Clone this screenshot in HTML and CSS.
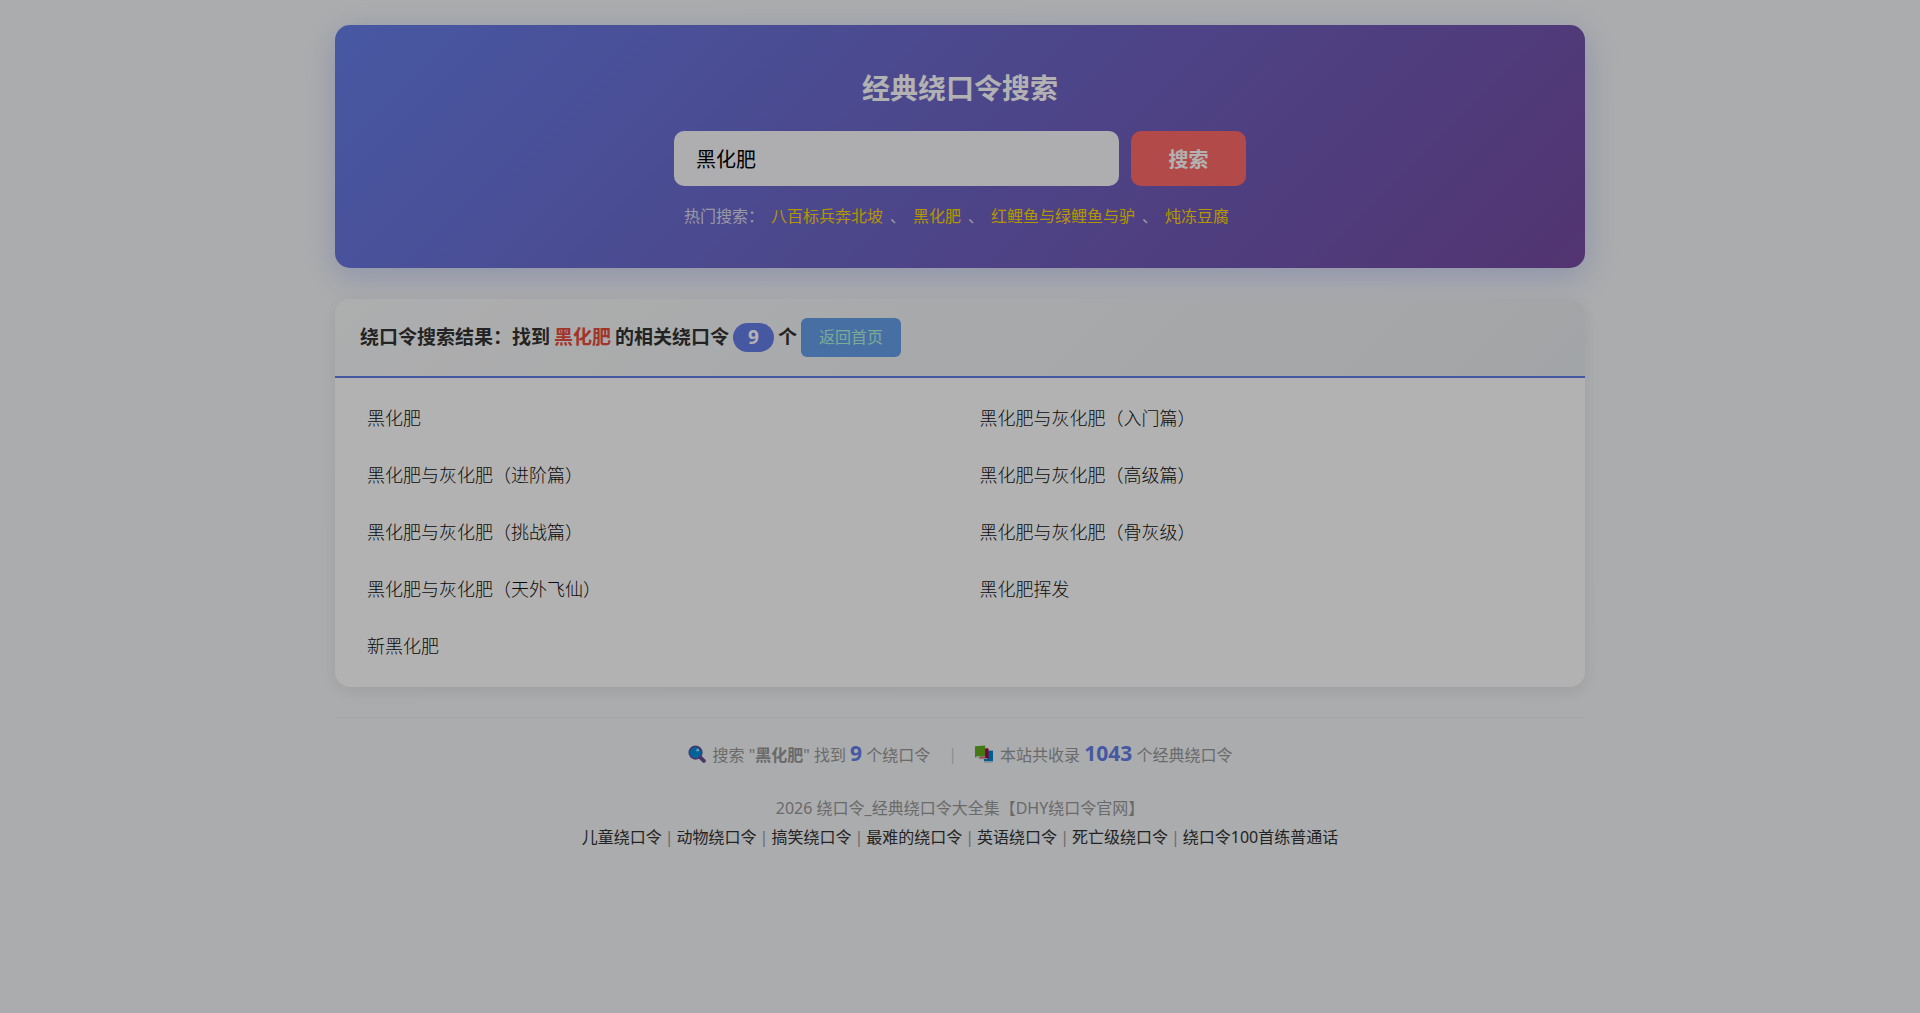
FILE: index.html
```html
<!DOCTYPE html>
<html lang="zh-CN">
<head>
<meta charset="UTF-8">
<meta name="viewport" content="width=device-width, initial-scale=1">
<title>经典绕口令搜索</title>
<link rel="stylesheet" href="styles.css">
</head>
<body>
<div class="container">
  <header class="hero">
    <h1 class="hero-title">经典绕口令搜索</h1>
    <form class="search-form">
      <input class="search-input" type="text" name="q" value="黑化肥" aria-label="搜索绕口令">
      <button class="search-button" type="submit">搜索</button>
    </form>
    <p class="hot">热门搜索：<a href="#">八百标兵奔北坡</a>、<a href="#">黑化肥</a>、<a href="#">红鲤鱼与绿鲤鱼与驴</a>、<a href="#">炖冻豆腐</a></p>
  </header>

  <main class="results">
    <h2 class="results-header"><span>绕口令搜索结果：找到</span> <span class="keyword">黑化肥</span> <span>的相关绕口令</span> <span class="count">9</span> <span>个</span> <a class="home-link" href="#">返回首页</a></h2>
    <ul class="results-list">
      <li><a href="#">黑化肥</a></li>
      <li><a href="#">黑化肥与灰化肥（入门篇）</a></li>
      <li><a href="#">黑化肥与灰化肥（进阶篇）</a></li>
      <li><a href="#">黑化肥与灰化肥（高级篇）</a></li>
      <li><a href="#">黑化肥与灰化肥（挑战篇）</a></li>
      <li><a href="#">黑化肥与灰化肥（骨灰级）</a></li>
      <li><a href="#">黑化肥与灰化肥（天外飞仙）</a></li>
      <li><a href="#">黑化肥挥发</a></li>
      <li><a href="#">新黑化肥</a></li>
    </ul>
  </main>

  <footer class="footer">
    <div class="stats">
      <svg class="icon" viewBox="0 0 16 16" aria-hidden="true"><path d="M10.5 10.5l3.6 3.6" stroke="#6b4f96" stroke-width="3.4" stroke-linecap="round"/><circle cx="6.7" cy="6.7" r="5.6" fill="#0090e0" stroke="#6b4f96" stroke-width="1.4"/><circle cx="8.6" cy="4.6" r="1.2" fill="#a8dcf5"/></svg>
      <span>搜索 "<strong>黑化肥</strong>" 找到 <b class="number">9</b> 个绕口令</span>
      <span class="divider">|</span>
      <svg class="icon" viewBox="0 0 16 16" aria-hidden="true"><path d="M8 5h8v9.500H8z" fill="#0086cc"/><path d="M8.500 14.500h7v1.200h-7z" fill="#b4c8e0"/><path d="M4 3h8v9.500H4z" fill="#b80043"/><path d="M4 11.500h7v1H4z" fill="#e0b0b8"/><path d="M0 1l9-.5v9.500H1.500L0 11.500z" fill="#65ad1f"/><path d="M1.500 10H9v1H.8z" fill="#c5d8b0"/></svg>
      <span>本站共收录 <b class="number">1043</b> 个经典绕口令</span>
    </div>
    <p class="copyright">2026 绕口令_经典绕口令大全集【DHY绕口令官网】</p>
    <nav class="footer-links"><a href="#">儿童绕口令</a><span>|</span><a href="#">动物绕口令</a><span>|</span><a href="#">搞笑绕口令</a><span>|</span><a href="#">最难的绕口令</a><span>|</span><a href="#">英语绕口令</a><span>|</span><a href="#">死亡级绕口令</a><span>|</span><a href="#">绕口令100首练普通话</a></nav>
  </footer>
</div>
<div class="overlay"></div>
</body>
</html>
```
FILE: styles.css
```css
* {
  box-sizing: border-box;
  margin: 0;
  padding: 0;
}

body {
  min-height: 100vh;
  padding: 25px 20px;
  background: linear-gradient(135deg, #f5f7f8, #f4f6f9);
  color: #333;
  font-family: "Noto Sans", "Noto Sans CJK SC", sans-serif;
  font-size: 16px;
  line-height: 26px;
}

a {
  color: inherit;
  text-decoration: none;
}

.container {
  max-width: 1250px;
  margin: 0 auto;
}

.hero {
  padding: 40px 30px 39px;
  border-radius: 15px;
  background: linear-gradient(135deg, #667eea, #764ba2);
  box-shadow: 0 8px 32px rgba(102, 126, 234, 0.3);
  color: #fff;
  text-align: center;
}

.hero-title {
  margin-bottom: 20px;
  font-size: 28px;
  line-height: 46px;
}

.search-form {
  display: flex;
  justify-content: center;
  gap: 12px;
  margin-bottom: 17px;
}

.search-input,
.search-button {
  height: 55px;
  border: 0;
  border-radius: 10px;
  font-family: inherit;
  font-size: 20px;
}

.search-input {
  width: 445px;
  padding: 0 22px;
  background: #f9f9fc;
  color: #000;
}

.search-button {
  width: 115px;
  background: #ff6b6b;
  color: #fff;
  font-weight: 700;
}

.hot {
  color: #dcdcec;
}

.hot a {
  margin: 0 7px;
  color: #ffd700;
}

.results {
  margin-top: 31px;
  overflow: hidden;
  border-radius: 15px;
  background: #fff;
  box-shadow: 0 4px 16px rgba(0, 0, 0, 0.08);
}

.results-header {
  display: flex;
  flex-wrap: wrap;
  align-items: center;
  gap: 4px;
  padding: 19px 25px;
  border-bottom: 2px solid #667eea;
  background: linear-gradient(135deg, #f8f9fa, #e9ecef);
  font-size: 19px;
  line-height: 39px;
}

.keyword {
  color: #e74c3c;
}

.count {
  padding: 0 15px;
  border-radius: 20px;
  background: #667eea;
  color: #fff;
  line-height: 29px;
}

.home-link {
  padding: 0 18px;
  border-radius: 6px;
  background: #66a0ea;
  color: #b0f5d8;
  font-size: 16px;
  font-weight: 400;
}

.results-list {
  display: grid;
  grid-template-columns: 1fr 1fr;
  gap: 10px 15px;
  padding: 17px 20px;
  list-style: none;
}

.results-list a {
  display: block;
  padding: 0 12px;
  color: #111;
  font-size: 18px;
  font-weight: 300;
  line-height: 47px;
}

.footer {
  margin-top: 30px;
  padding-top: 20px;
  border-top: 1px solid #e9ecef;
  color: #999;
  text-align: center;
}

.stats {
  display: flex;
  justify-content: center;
  align-items: center;
  margin-bottom: 24px;
  line-height: 30px;
}

.icon {
  width: 18px;
  height: 18px;
  margin-right: 7px;
}

.divider {
  margin: 0 18px;
  color: #ccc;
}

.number {
  color: #667eea;
  font-size: 21px;
}

.copyright {
  line-height: 29px;
}

.footer-links {
  display: flex;
  flex-wrap: wrap;
  justify-content: center;
  gap: 3px;
  line-height: 29px;
}

.footer-links a {
  color: #333;
}

.overlay {
  position: fixed;
  inset: 0;
  background: rgba(0, 0, 0, 0.3);
}
```
